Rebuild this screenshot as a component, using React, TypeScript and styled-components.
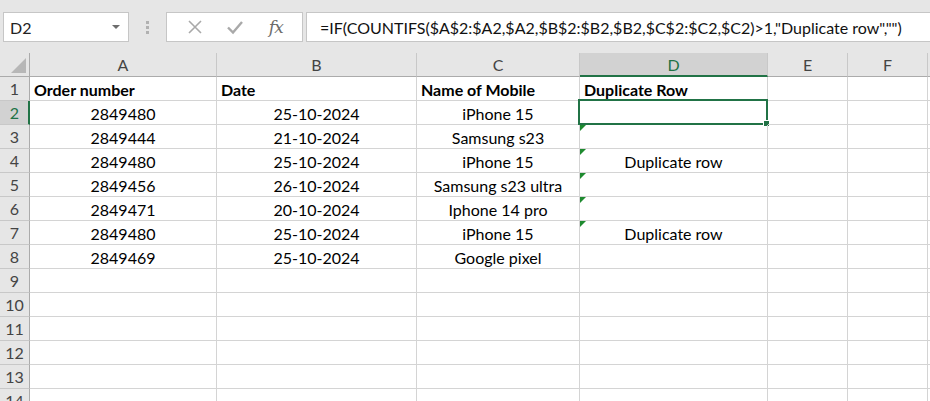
import styled, { createGlobalStyle, css } from "styled-components";

const GlobalStyle = createGlobalStyle`
  html, body {
    margin: 0;
    padding: 0;
    background: #ffffff;
  }
  body {
    font-family: Lato, "Liberation Sans", sans-serif;
  }
`;

const GREEN = "#217346";
const GRID = "#d4d4d4";

interface IRow {
  order: string;
  date: string;
  mobile: string;
  dup: string;
  flag: boolean;
}

const columns = [
  { key: "A", width: 187 },
  { key: "B", width: 200 },
  { key: "C", width: 163 },
  { key: "D", width: 188 },
  { key: "E", width: 80 },
  { key: "F", width: 80 },
  { key: "G", width: 80 },
];

const rows: IRow[] = [
  { order: "2849480", date: "25-10-2024", mobile: "iPhone 15", dup: "", flag: false },
  { order: "2849444", date: "21-10-2024", mobile: "Samsung s23", dup: "", flag: true },
  { order: "2849480", date: "25-10-2024", mobile: "iPhone 15", dup: "Duplicate row", flag: true },
  { order: "2849456", date: "26-10-2024", mobile: "Samsung s23 ultra", dup: "", flag: true },
  { order: "2849471", date: "20-10-2024", mobile: "Iphone 14 pro", dup: "", flag: true },
  { order: "2849480", date: "25-10-2024", mobile: "iPhone 15", dup: "Duplicate row", flag: true },
  { order: "2849469", date: "25-10-2024", mobile: "Google pixel", dup: "", flag: false },
];

const Window = styled.div`
  width: 930px;
  height: 401px;
  overflow: hidden;
  background: #e6e6e6;
`;

const FormulaBar = styled.div`
  height: 53px;
  box-sizing: border-box;
  padding: 12px 0 0 3px;
  display: flex;
  align-items: flex-start;
`;

const NameBox = styled.div`
  width: 126px;
  height: 30px;
  box-sizing: border-box;
  border: 1px solid #c6c6c6;
  background: #fff;
  display: flex;
  align-items: center;
  justify-content: space-between;
  padding: 0 8px 0 6px;
  font-size: 16px;
  color: #222;
`;

const DropArrow = styled.span`
  width: 0;
  height: 0;
  border-left: 4px solid transparent;
  border-right: 4px solid transparent;
  border-top: 4px solid #6d6d6d;
`;

const Grip = styled.div`
  width: 37px;
  height: 30px;
  display: flex;
  flex-direction: column;
  align-items: center;
  justify-content: center;
  gap: 2px;
`;

const GripDot = styled.span`
  width: 3px;
  height: 3px;
  background: #b1b1b1;
`;

const ButtonBox = styled.div`
  width: 137px;
  height: 30px;
  box-sizing: border-box;
  border: 1px solid #c6c6c6;
  background: #fff;
  display: flex;
  align-items: center;
  justify-content: space-around;
  padding: 0 6px 0 8px;
`;

const IconSlot = styled.span`
  width: 30px;
  display: flex;
  justify-content: center;
  align-items: center;
`;

const Fx = styled.span`
  font-family: "DejaVu Serif", "Liberation Serif", serif;
  font-style: italic;
  font-size: 17px;
  color: #6b6b6b;
  letter-spacing: -1px;
`;

const FormulaInput = styled.div`
  flex: 1;
  height: 30px;
  margin-left: 3px;
  box-sizing: border-box;
  border: 1px solid #c6c6c6;
  border-right: none;
  background: #fff;
  display: flex;
  align-items: center;
  padding-left: 13px;
  font-size: 16px;
  color: #111;
  white-space: nowrap;
  overflow: hidden;
`;

const Sheet = styled.div`
  display: grid;
  grid-template-columns: 30px ${columns.map((c) => `${c.width}px`).join(" ")};
  grid-auto-rows: 24px;
  background: #fff;
`;

const Corner = styled.div`
  box-sizing: border-box;
  background: #e6e6e6;
  border-right: 1px solid #ababab;
  border-bottom: 1px solid #ababab;
  position: relative;
`;

const CornerTriangle = styled.span`
  position: absolute;
  right: 3px;
  bottom: 3px;
  width: 0;
  height: 0;
  border-left: 15px solid transparent;
  border-bottom: 15px solid #b7b7b7;
`;

const ColHeader = styled.div<{ $active?: boolean }>`
  box-sizing: border-box;
  background: #e6e6e6;
  border-right: 1px solid #c8c8c8;
  border-bottom: 1px solid #ababab;
  display: flex;
  align-items: center;
  justify-content: center;
  font-size: 16px;
  color: #444;
  ${(p) =>
    p.$active &&
    css`
      background: #d2d2d2;
      color: ${GREEN};
      border-bottom: 2px solid ${GREEN};
      padding-top: 1px;
    `}
`;

const RowHeader = styled.div<{ $active?: boolean }>`
  box-sizing: border-box;
  background: #e6e6e6;
  border-right: 1px solid #ababab;
  border-bottom: 1px solid #c8c8c8;
  display: flex;
  align-items: center;
  justify-content: center;
  font-size: 16px;
  color: #444;
  ${(p) =>
    p.$active &&
    css`
      background: #d2d2d2;
      color: ${GREEN};
      border-right: 2px solid ${GREEN};
      padding-left: 1px;
    `}
`;

const Cell = styled.div<{ $bold?: boolean; $center?: boolean }>`
  box-sizing: border-box;
  position: relative;
  border-right: 1px solid ${GRID};
  border-bottom: 1px solid ${GRID};
  display: flex;
  align-items: center;
  padding: 2px 4px 0;
  font-size: 16px;
  color: #000;
  white-space: nowrap;
  justify-content: ${(p) => (p.$center ? "center" : "flex-start")};
  font-weight: ${(p) => (p.$bold ? 700 : 400)};
`;

const Selection = styled.span`
  position: absolute;
  left: -2px;
  top: -2px;
  right: -1px;
  bottom: -1px;
  border: 2px solid ${GREEN};
  pointer-events: none;
`;

const FillHandle = styled.span`
  position: absolute;
  right: -3px;
  bottom: -3px;
  width: 5px;
  height: 5px;
  background: ${GREEN};
  border: 1px solid #fff;
  border-right: none;
  border-bottom: none;
`;

const ErrorFlag = styled.span`
  position: absolute;
  left: 0;
  top: 0;
  width: 0;
  height: 0;
  border-top: 6px solid #1e8a2f;
  border-right: 6px solid transparent;
`;

function App() {
  const totalRows = 14;
  return (
    <Window>
      <GlobalStyle />
      <FormulaBar>
        <NameBox>
          D2
          <DropArrow />
        </NameBox>
        <Grip>
          <GripDot />
          <GripDot />
          <GripDot />
        </Grip>
        <ButtonBox>
          <IconSlot>
            <svg width="16" height="16" viewBox="0 0 16 16">
              <path d="M2 2 L14 14 M14 2 L2 14" stroke="#a9a9a9" strokeWidth="1.6" fill="none" />
            </svg>
          </IconSlot>
          <IconSlot>
            <svg width="18" height="16" viewBox="0 0 18 16">
              <path d="M2 8.5 L7 13.5 L16 3" stroke="#a9a9a9" strokeWidth="2.4" fill="none" />
            </svg>
          </IconSlot>
          <IconSlot>
            <Fx>fx</Fx>
          </IconSlot>
        </ButtonBox>
        <FormulaInput>
          =IF(COUNTIFS($A$2:$A2,$A2,$B$2:$B2,$B2,$C$2:$C2,$C2)&gt;1,"Duplicate row","")
        </FormulaInput>
      </FormulaBar>
      <Sheet>
        <Corner>
          <CornerTriangle />
        </Corner>
        {columns.map((c) => (
          <ColHeader key={c.key} $active={c.key === "D"}>
            {c.key === "G" ? "" : c.key}
          </ColHeader>
        ))}

        <RowHeader>1</RowHeader>
        <Cell $bold>Order number</Cell>
        <Cell $bold>Date</Cell>
        <Cell $bold>Name of Mobile</Cell>
        <Cell $bold>Duplicate Row</Cell>
        <Cell />
        <Cell />
        <Cell />

        {Array.from({ length: totalRows - 1 }, (_, i) => {
          const n = i + 2;
          const r = rows[i];
          return [
            <RowHeader key={`h${n}`} $active={n === 2}>
              {n}
            </RowHeader>,
            <Cell key={`a${n}`} $center>
              {r?.order}
            </Cell>,
            <Cell key={`b${n}`} $center>
              {r?.date}
            </Cell>,
            <Cell key={`c${n}`} $center>
              {r?.mobile}
            </Cell>,
            <Cell key={`d${n}`} $center>
              {r?.flag && <ErrorFlag />}
              {r?.dup}
              {n === 2 && (
                <Selection>
                  <FillHandle />
                </Selection>
              )}
            </Cell>,
            <Cell key={`e${n}`} />,
            <Cell key={`f${n}`} />,
            <Cell key={`g${n}`} />,
          ];
        })}
      </Sheet>
    </Window>
  );
}

export default App;
